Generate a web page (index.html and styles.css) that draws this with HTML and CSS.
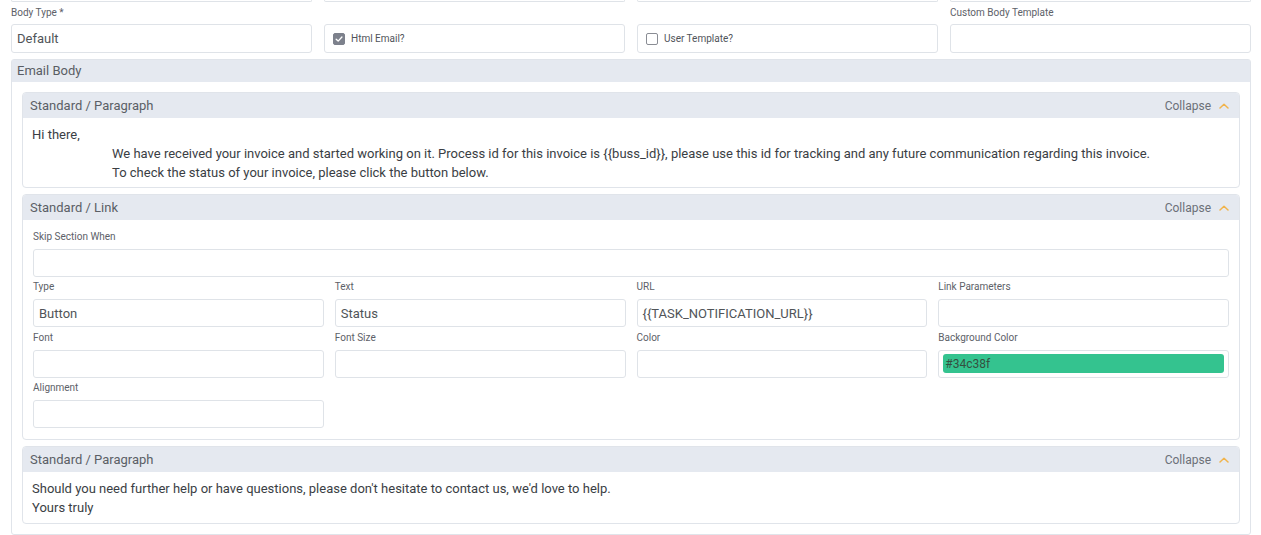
FILE: index.html
```html
<!DOCTYPE html>
<html>
<head>
<meta charset="utf-8">
<link rel="stylesheet" href="styles.css">
</head>
<body>
<div class="page">
  <div class="stub-row">
    <div class="stub"></div><div class="stub"></div><div class="stub"></div><div class="stub"></div>
  </div>
  <div class="grid4 top-grid">
    <div class="field">
      <div class="label">Body Type *</div>
      <div class="input"><span class="val">Default</span></div>
    </div>
    <div class="field">
      <div class="label"></div>
      <div class="input check-input">
        <span class="checkbox checked"><svg viewBox="0 0 12 12" width="12" height="12"><path d="M2.6 6.2 L5 8.5 L9.5 3.6" fill="none" stroke="#fff" stroke-width="1.6" stroke-linecap="round" stroke-linejoin="round"/></svg></span>
        <span class="check-label">Html Email?</span>
      </div>
    </div>
    <div class="field">
      <div class="label"></div>
      <div class="input check-input">
        <span class="checkbox"></span>
        <span class="check-label">User Template?</span>
      </div>
    </div>
    <div class="field">
      <div class="label">Custom Body Template</div>
      <div class="input"></div>
    </div>
  </div>

  <div class="panel">
    <div class="panel-head">Email Body</div>
    <div class="panel-body">
      <div class="section">
        <div class="sec-head">
          <span>Standard / Paragraph</span>
          <span class="collapse">Collapse <svg class="chev" viewBox="0 0 10 6" width="10" height="6"><path d="M1 5 L5 1.2 L9 5" fill="none" stroke="#f1b44c" stroke-width="1.5" stroke-linecap="round" stroke-linejoin="round"/></svg></span>
        </div>
        <div class="para para-first">
          <div>Hi there,</div>
          <div class="indent">We have received your invoice and started working on it. Process id for this invoice is {{buss_id}}, please use this id for tracking and any future communication regarding this invoice.</div>
          <div class="indent">To check the status of your invoice, please click the button below.</div>
        </div>
      </div>

      <div class="section">
        <div class="sec-head">
          <span>Standard / Link</span>
          <span class="collapse">Collapse <svg class="chev" viewBox="0 0 10 6" width="10" height="6"><path d="M1 5 L5 1.2 L9 5" fill="none" stroke="#f1b44c" stroke-width="1.5" stroke-linecap="round" stroke-linejoin="round"/></svg></span>
        </div>
        <div class="form">
          <div class="field">
            <div class="label">Skip Section When</div>
            <div class="input"></div>
          </div>
          <div class="grid4 inner-grid">
            <div class="field">
              <div class="label">Type</div>
              <div class="input"><span class="val">Button</span></div>
            </div>
            <div class="field">
              <div class="label">Text</div>
              <div class="input"><span class="val">Status</span></div>
            </div>
            <div class="field">
              <div class="label">URL</div>
              <div class="input"><span class="val">{{TASK_NOTIFICATION_URL}}</span></div>
            </div>
            <div class="field">
              <div class="label">Link Parameters</div>
              <div class="input"></div>
            </div>
            <div class="field">
              <div class="label">Font</div>
              <div class="input"></div>
            </div>
            <div class="field">
              <div class="label">Font Size</div>
              <div class="input"></div>
            </div>
            <div class="field">
              <div class="label">Color</div>
              <div class="input"></div>
            </div>
            <div class="field">
              <div class="label">Background Color</div>
              <div class="input color-input"><span class="swatch">#34c38f</span></div>
            </div>
            <div class="field">
              <div class="label">Alignment</div>
              <div class="input"></div>
            </div>
          </div>
        </div>
      </div>

      <div class="section">
        <div class="sec-head">
          <span>Standard / Paragraph</span>
          <span class="collapse">Collapse <svg class="chev" viewBox="0 0 10 6" width="10" height="6"><path d="M1 5 L5 1.2 L9 5" fill="none" stroke="#f1b44c" stroke-width="1.5" stroke-linecap="round" stroke-linejoin="round"/></svg></span>
        </div>
        <div class="para">
          <div>Should you need further help or have questions, please don't hesitate to contact us, we'd love to help.</div>
          <div>Yours truly</div>
        </div>
      </div>
    </div>
  </div>
</div>
</body>
</html>
```

FILE: styles.css
```css
* { box-sizing: border-box; }
html, body { margin: 0; padding: 0; background: #fff; }
body {
  font-family: Roboto, "Liberation Sans", sans-serif;
  color: #495057;
  font-size: 13px;
}
.page {
  padding: 0 10px 0 11px;
  height: 535px;
  overflow: hidden;
}
.grid4 {
  display: grid;
  grid-template-columns: repeat(4, 1fr);
  column-gap: 12px;
}
.stub-row {
  display: grid;
  grid-template-columns: repeat(4, 1fr);
  column-gap: 12px;
  height: 2px;
}
.stub {
  border: 1px solid #dfe3e8;
  border-top: none;
  border-radius: 0 0 3px 3px;
}
.top-grid { padding-top: 4px; }
.top-grid .label { margin-bottom: 4px; }
.field { display: flex; flex-direction: column; }
.label {
  font-size: 10px;
  line-height: 14px;
  height: 14px;
  color: #5d6168;
  margin-bottom: 5px;
}
.input {
  height: 29px;
  border: 1px solid #dfe3e8;
  border-radius: 3px;
  background: #fff;
  display: flex;
  align-items: center;
  padding: 0 5px;
}
.val {
  font-size: 13px;
  color: #505458;
}
.check-input { padding-left: 8px; }
.checkbox {
  width: 12px;
  height: 12px;
  border: 1px solid #8a8d94;
  border-radius: 2px;
  background: #fff;
  display: inline-flex;
  align-items: center;
  justify-content: center;
  margin-right: 6px;
}
.checkbox.checked {
  background: #7d818c;
  border-color: #7d818c;
}
.checkbox svg { display: block; }
.check-label { font-size: 10px; color: #50545a; }

.panel {
  margin-top: 6px;
  border: 1px solid #e0e4ea;
  border-radius: 3px;
}
.panel-head {
  height: 22px;
  line-height: 22px;
  background: #e5e9f0;
  padding-left: 5px;
  font-size: 13px;
  color: #595d64;
}
.panel-body {
  padding: 10px;
  display: flex;
  flex-direction: column;
  gap: 6px;
}
.section {
  border: 1px solid #e0e4ea;
  border-radius: 4px;
  overflow: hidden;
}
.sec-head {
  height: 25px;
  background: #e5e9f0;
  display: flex;
  align-items: center;
  justify-content: space-between;
  padding: 0 10px 0 7px;
  font-size: 13px;
  color: #5b5f66;
}
.collapse {
  font-size: 12px;
  color: #6c7078;
  display: flex;
  align-items: center;
  gap: 8px;
}
.chev { display: block; }
.para {
  padding: 7px 9px 6px 9px;
  line-height: 19px;
  font-size: 13px;
  color: #3a3e44;
}
.para-first { padding-bottom: 5px; }
.indent { padding-left: 80px; }
.form {
  padding: 10px 10px 8px 10px;
  display: flex;
  flex-direction: column;
}
.form .field { margin-bottom: 3px; }
.form .input { height: 28px; }
.inner-grid { column-gap: 11px; row-gap: 0.5px; }
.color-input { padding: 0 4px; }
.swatch {
  display: flex;
  align-items: center;
  width: 100%;
  height: 19px;
  background: #34c38f;
  border-radius: 3px;
  padding-left: 2px;
  font-size: 12px;
  color: #34503f;
}
```
